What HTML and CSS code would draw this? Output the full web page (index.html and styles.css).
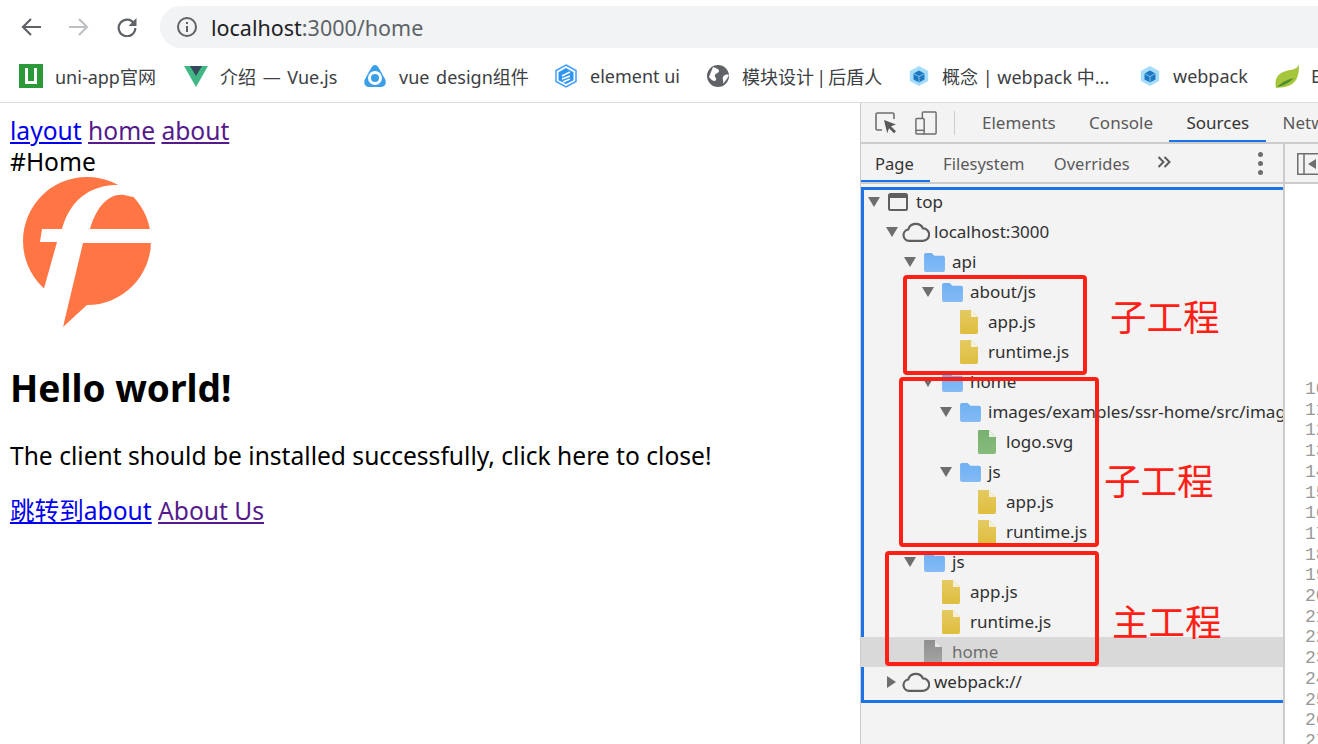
FILE: index.html
```html
<!DOCTYPE html>
<html lang="zh-CN">
<head>
<meta charset="utf-8">
<title>localhost:3000/home</title>
<link rel="stylesheet" href="styles.css">
</head>
<body>
<svg class="defs" width="0" height="0" aria-hidden="true">
  <defs>
    <linearGradient id="gFolder" x1="0" y1="0" x2="0" y2="1"><stop offset="0" stop-color="#6fb0f3"/><stop offset="1" stop-color="#84bbf6"/></linearGradient>
    <linearGradient id="gYellow" x1="0" y1="0" x2="0" y2="1"><stop offset="0" stop-color="#e4ca62"/><stop offset="1" stop-color="#dfbd3e"/></linearGradient>
    <linearGradient id="gGreen" x1="0" y1="0" x2="0" y2="1"><stop offset="0" stop-color="#78b06f"/><stop offset="1" stop-color="#86bb7c"/></linearGradient>
    <linearGradient id="gGray" x1="0" y1="0" x2="0" y2="1"><stop offset="0" stop-color="#8f8f8f"/><stop offset="1" stop-color="#a5a5a5"/></linearGradient>
    <symbol id="folder" viewBox="0 0 22 20"><path d="M0 2a2 2 0 0 1 2-2h6l3 3h9a2 2 0 0 1 2 2v13a2 2 0 0 1-2 2H2a2 2 0 0 1-2-2z" fill="url(#gFolder)"/></symbol>
    <symbol id="fileY" viewBox="0 0 18 24"><path d="M1 0h10l7 7v15a2 2 0 0 1-2 2H1.500A1.500 1.500 0 0 1 0 22.500V1a1 1 0 0 1 1-1z" fill="url(#gYellow)"/><path d="M11 0l7 7h-7z" fill="#f5efd8"/></symbol>
    <symbol id="fileG" viewBox="0 0 18 24"><path d="M1 0h10l7 7v15a2 2 0 0 1-2 2H1.500A1.500 1.500 0 0 1 0 22.500V1a1 1 0 0 1 1-1z" fill="url(#gGreen)"/><path d="M11 0l7 7h-7z" fill="#e6f0e3"/></symbol>
    <symbol id="fileK" viewBox="0 0 18 24"><path d="M1 0h10l7 7v15a2 2 0 0 1-2 2H1.500A1.500 1.500 0 0 1 0 22.500V1a1 1 0 0 1 1-1z" fill="url(#gGray)"/><path d="M11 0l7 7h-7z" fill="#e6e6e6"/></symbol>
    <symbol id="cloud" viewBox="0 0 28 20"><path d="M7 18.800a5.700 5.700 0 0 1-.8-11.300A8 8 0 0 1 21 6.400a6.200 6.200 0 0 1 0 12.400z" fill="none" stroke="#5f5f5f" stroke-width="2.200"/></symbol>
    <symbol id="wp" viewBox="0 0 24 24"><path d="M12 1l10 5.500v11L12 23 2 17.500v-11z" fill="#a5dcfa"/><path d="M12 6l6 3.300v6.400L12 19l-6-3.300V9.300z" fill="#1c78c0"/><path d="M6 9.300l6 3.300 6-3.300M12 12.600V19" fill="none" stroke="#a5dcfa" stroke-width=".8"/></symbol>
  </defs>
</svg>

<div class="page">
  <header class="toolbar">
    <svg class="nav-icon" viewBox="0 0 20 20"><path d="M20 10H2.500M10 2l-8 8 8 8" fill="none" stroke="#5f6368" stroke-width="2.200"/></svg>
    <svg class="nav-icon" viewBox="0 0 20 20"><path d="M0 10h17.500M10 2l8 8-8 8" fill="none" stroke="#bdc1c6" stroke-width="2.200"/></svg>
    <svg class="nav-icon" viewBox="0 0 20 20"><path d="M17 6.500A8.300 8.300 0 1 0 18.300 11" fill="none" stroke="#5f6368" stroke-width="2.200"/><path d="M19.500 1v8h-8z" fill="#5f6368"/></svg>
    <div class="omnibox">
      <svg class="info" viewBox="0 0 20 20"><circle cx="10" cy="10" r="9" fill="none" stroke="#5f6368" stroke-width="2"/><path d="M9 9h2v6H9zM9 5h2v2H9z" fill="#5f6368"/></svg>
      <span class="url"><span class="host">localhost</span>:3000/home</span>
    </div>
  </header>

  <nav class="bookmarks">
    <div class="bm"><svg class="bm-icon" viewBox="0 0 24 24"><rect width="24" height="24" fill="#2b9939"/><path d="M6 4h3v13h6V4h3v16H6z" fill="#fff"/></svg><span>uni-app官网</span></div>
    <div class="bm"><svg class="bm-icon" viewBox="0 0 24 24"><path d="M0 2h24L12 23z" fill="#41b883"/><path d="M6 2h12l-6 10z" fill="#35495e"/></svg><span class="wide">介绍 — Vue.js</span></div>
    <div class="bm"><svg class="bm-icon" viewBox="0 0 24 24"><path d="M12 1c2 0 3 1.500 5 5l5 9c2 4 0 8-4 8H6c-4 0-6-4-4-8l5-9c2-3.500 3-5 5-5z" fill="#3b9fe8"/><circle cx="12" cy="14" r="5.500" fill="none" stroke="#fff" stroke-width="3"/></svg><span class="wide">vue design组件</span></div>
    <div class="bm"><svg class="bm-icon" viewBox="0 0 24 24"><path d="M12 1l10 5.500v11L12 23 2 17.500v-11z" fill="#fff" stroke="#409eff" stroke-width="1.500"/><path d="M12 4l7.500 4.200v8L12 20l-7.500-3.800v-8z" fill="#2e95f5"/><path d="M8 12l8-4M8 15l8-3M9 18l7-3" stroke="#fff" stroke-width="1.500"/></svg><span>element ui</span></div>
    <div class="bm"><svg class="bm-icon" viewBox="0 0 24 24"><circle cx="12" cy="12" r="11" fill="#5f6368"/><path d="M7 3c3 1 6 2 6 4s-3 2-4 4 2 3 1 5-4 1-7-3zM23 11c-3-1-5 0-6 2s1 4 0 6 4-3 6-8z" fill="#fff"/></svg><span class="tight">模块设计 | 后盾人</span></div>
    <div class="bm"><svg class="bm-icon wp-icon"><use href="#wp"/></svg><span>概念 | webpack 中...</span></div>
    <div class="bm"><svg class="bm-icon wp-icon"><use href="#wp"/></svg><span>webpack</span></div>
    <div class="bm"><svg class="bm-icon" viewBox="0 0 24 24"><path d="M24 0C22 6 18 5 11 7 3 9-1 15 1 24c5-1 15 0 20-8 3-5 3-11 3-16z" fill="#a5c63b"/><path d="M2 23c6-6 12-8 17-9-5 5-11 8-17 9z" fill="#4f8e2e"/></svg><span>E</span></div>
  </nav>

  <main class="main">
    <section class="content">
      <div><a class="link" href="#">layout</a> <a class="link seen" href="#">home</a> <a class="link seen" href="#">about</a></div>
      <div>#Home</div>
      <svg class="logo" viewBox="10 177 150 152">
        <circle cx="87" cy="241" r="64" fill="#ff7544"/>
        <path d="M63 327 88 304 100 290 70 270z" fill="#ff7544"/>
        <path d="M120 185C100 184 72 192 62 229H42L40 242H57L43 292 63 327 83 243H160V229H90C97 205 110 193 124 195L133 197 165 170H120z" fill="#fff"/>
      </svg>
      <h1 class="hello">Hello world!</h1>
      <p class="para">The client should be installed successfully, click here to close!</p>
      <p class="para"><a class="link" href="#">跳转到about</a> <a class="link seen" href="#">About Us</a></p>
    </section>

    <aside class="devtools">
      <div class="dt-tabs">
        <svg class="dt-icon" viewBox="0 0 22 22"><path d="M7 18H2.500A1.500 1.500 0 0 1 1 16.500v-14A1.500 1.500 0 0 1 2.500 1h15A1.500 1.500 0 0 1 19 2.500V7" fill="none" stroke="#6e6e6e" stroke-width="1.600"/><path d="M9 8l12 4.500-5 1.800 5 5-2 2-5-5-1.800 5z" fill="#5a5a5a"/></svg>
        <svg class="dt-icon" viewBox="0 0 24 26"><path d="M8 8V2a1 1 0 0 1 1-1h13a1 1 0 0 1 1 1v22a1 1 0 0 1-1 1H9" fill="none" stroke="#6e6e6e" stroke-width="1.600"/><rect x="1" y="8" width="9" height="17" rx="1" fill="none" stroke="#6e6e6e" stroke-width="1.600"/><path d="M1 21h9" stroke="#6e6e6e" stroke-width="1.600"/></svg>
        <span class="dt-sep"></span>
        <span class="tab">Elements</span>
        <span class="tab">Console</span>
        <span class="tab active">Sources</span>
        <span class="tab">Network</span>
      </div>
      <div class="dt-body">
        <div class="navigator">
          <div class="sub-tabs">
            <span class="sub active">Page</span>
            <span class="sub">Filesystem</span>
            <span class="sub">Overrides</span>
            <svg class="more" viewBox="0 0 14 12"><path d="M1.500 1l5 5-5 5M7.500 1l5 5-5 5" fill="none" stroke="#5a5a5a" stroke-width="2"/></svg>
            <span class="kebab"><i></i><i></i><i></i></span>
          </div>
          <div class="tree">
            <div class="row d0"><span class="tri"></span><svg class="ico win" viewBox="0 0 20 18"><rect x="1" y="1" width="18" height="16" rx="1.500" fill="none" stroke="#5f5f5f" stroke-width="2"/><path d="M1 3.500h18" stroke="#5f5f5f" stroke-width="3"/></svg><span class="label">top</span></div>
            <div class="row d1"><span class="tri"></span><svg class="ico cld"><use href="#cloud"/></svg><span class="label">localhost:3000</span></div>
            <div class="row d2"><span class="tri"></span><svg class="ico fld"><use href="#folder"/></svg><span class="label">api</span></div>
            <div class="row d3"><span class="tri"></span><svg class="ico fld"><use href="#folder"/></svg><span class="label">about/js</span></div>
            <div class="row d4"><span class="notri"></span><svg class="ico fil"><use href="#fileY"/></svg><span class="label">app.js</span></div>
            <div class="row d4"><span class="notri"></span><svg class="ico fil"><use href="#fileY"/></svg><span class="label">runtime.js</span></div>
            <div class="row d3"><span class="tri"></span><svg class="ico fld"><use href="#folder"/></svg><span class="label">home</span></div>
            <div class="row d4"><span class="tri"></span><svg class="ico fld"><use href="#folder"/></svg><span class="label">images/examples/ssr-home/src/images</span></div>
            <div class="row d5"><span class="notri"></span><svg class="ico fil"><use href="#fileG"/></svg><span class="label">logo.svg</span></div>
            <div class="row d4"><span class="tri"></span><svg class="ico fld"><use href="#folder"/></svg><span class="label">js</span></div>
            <div class="row d5"><span class="notri"></span><svg class="ico fil"><use href="#fileY"/></svg><span class="label">app.js</span></div>
            <div class="row d5"><span class="notri"></span><svg class="ico fil"><use href="#fileY"/></svg><span class="label">runtime.js</span></div>
            <div class="row d2"><span class="tri"></span><svg class="ico fld"><use href="#folder"/></svg><span class="label">js</span></div>
            <div class="row d3"><span class="notri"></span><svg class="ico fil"><use href="#fileY"/></svg><span class="label">app.js</span></div>
            <div class="row d3"><span class="notri"></span><svg class="ico fil"><use href="#fileY"/></svg><span class="label">runtime.js</span></div>
            <div class="row d2 selected"><span class="notri"></span><svg class="ico fil"><use href="#fileK"/></svg><span class="label">home</span></div>
            <div class="row d1"><span class="tri closed"></span><svg class="ico cld"><use href="#cloud"/></svg><span class="label">webpack://</span></div>
          </div>
        </div>
        <div class="editor">
          <div class="ed-bar"><svg class="toggle" viewBox="0 0 24 22"><rect x=".75" y=".75" width="22.500" height="20.500" fill="none" stroke="#6e6e6e" stroke-width="1.500"/><path d="M7 1v20" stroke="#6e6e6e" stroke-width="1.500"/><path d="M19 6v10l-8-5z" fill="#6e6e6e"/></svg></div>
          <ol class="lines">
            <li>10</li><li>11</li><li>12</li><li>13</li><li>14</li><li>15</li><li>16</li><li>17</li><li>18</li><li>19</li><li>20</li><li>21</li><li>22</li><li>23</li><li>24</li><li>25</li><li>26</li><li>27</li>
          </ol>
        </div>
      </div>
    </aside>
  </main>

  <div class="mark box1"></div>
  <div class="mark box2"></div>
  <div class="mark box3"></div>
  <div class="note note1">子工程</div>
  <div class="note note2">子工程</div>
  <div class="note note3">主工程</div>
</div>
</body>
</html>
```

FILE: styles.css
```css
* { box-sizing: border-box; }
html, body { margin: 0; padding: 0; height: 100%; overflow: hidden; background: #fff; }
body { font-family: "Noto Sans", "Noto Sans CJK SC", sans-serif; color: #000; }
.defs { position: absolute; }
.page { position: relative; width: 1318px; height: 744px; overflow: hidden; display: flex; flex-direction: column; }

/* browser chrome */
.toolbar { height: 54px; flex: none; display: flex; align-items: center; padding: 0 0 0 21px; }
.nav-icon { width: 20px; height: 20px; margin-right: 28px; flex: none; }
.omnibox { flex: 1; height: 42px; margin-left: -5px; margin-right: -40px; background: #f1f3f4; border-radius: 21px; display: flex; align-items: center; padding-left: 17px; }
.info { width: 20px; height: 20px; flex: none; }
.url { margin-left: 14px; font-size: 21.500px; color: #5f6368; white-space: nowrap; }
.host { color: #202124; }

.bookmarks { height: 49px; flex: none; display: grid; grid-template-columns: 165px 179px 191px 152px 202px 231px 136px 60px; padding-left: 19px; padding-bottom: 4px; align-items: center; border-bottom: 1px solid #dadce0; white-space: nowrap; overflow: hidden; font-size: 18px; color: #3c4043; }
.bm { display: flex; align-items: center; gap: 12px; overflow: hidden; }
.bm-icon { width: 24px; height: 24px; flex: none; }
.wp-icon { width: 22px; height: 22px; }
.wide { word-spacing: 2px; }
.tight { word-spacing: -2.500px; }

/* main area */
.main { flex: 1; display: flex; min-height: 0; }
.content { width: 860px; flex: none; padding: 12px 10px 0; font-size: 24.600px; line-height: 31px; }
.link { color: #00e; text-decoration: underline; }
.link.seen { color: #551a8b; }
.logo { display: block; width: 150px; height: 152px; }
.hello { margin: 35px 0 0; font-size: 37px; line-height: 48px; font-weight: 700; }
.para { margin: 24px 0 0; }
.hello + .para { margin-top: 28px; }

/* devtools */
.devtools { flex: 1; min-width: 0; display: flex; flex-direction: column; background: #f3f3f3; border-left: 1px solid #ccc; overflow: hidden; font-size: 17px; }
.dt-tabs { height: 41px; flex: none; display: flex; align-items: center; border-bottom: 2px solid #ccc; padding-left: 14px; white-space: nowrap; color: #5a5a5a; }
.dt-icon { width: 22px; height: 24px; flex: none; margin-right: 18px; }
.dt-sep { width: 1px; height: 24px; background: #ccc; flex: none; margin-right: 10px; margin-left: -1px; }
.tab { height: 39px; line-height: 40px; padding: 0 17px; flex: none; }
.tab + .tab { margin-left: -.6px; }
.tab.active { color: #333; box-shadow: inset 0 -2px 0 #1a73e8; }

.dt-body { flex: 1; display: flex; min-height: 0; }
.navigator { width: 424px; flex: none; border-right: 2px solid #ccc; display: flex; flex-direction: column; }
.sub-tabs { height: 40px; flex: none; display: flex; align-items: center; border-bottom: 2px solid #ccc; color: #5a5a5a; white-space: nowrap; font-size: 16.500px; }
.sub { height: 38px; line-height: 39px; padding: 0 16px 0 14px; flex: none; }
.sub + .sub { margin-left: -.6px; }
.sub.active { color: #333; box-shadow: inset 0 -2px 0 #1a73e8; }
.more { width: 14px; height: 12px; flex: none; margin-left: 11px; margin-top: -2px; }
.kebab { margin-left: auto; margin-right: 20px; display: flex; flex-direction: column; gap: 4px; }
.kebab i { width: 5px; height: 5px; border-radius: 50%; background: #6e6e6e; display: block; }

.tree { margin-top: 3px; padding-bottom: 6px; box-shadow: inset 3px 3px 0 #1a73e8, inset 0 -3px 0 #1a73e8; color: #303030; }
.row { height: 30px; display: flex; align-items: center; white-space: nowrap; overflow: hidden; }
.d0 { padding-left: 7px; }
.d1 { padding-left: 25px; }
.d2 { padding-left: 43px; }
.d3 { padding-left: 61px; }
.d4 { padding-left: 79px; }
.d5 { padding-left: 97px; }
.selected { background: #d9d9d9; color: #6e6e6e; }
.tri, .notri { width: 20px; flex: none; display: block; }
.tri::before { content: ""; display: block; width: 0; height: 0; border-left: 6px solid transparent; border-right: 6px solid transparent; border-top: 10px solid #6e6e6e; }
.tri.closed::before { margin-left: 1px; border-top: 6px solid transparent; border-bottom: 6px solid transparent; border-left: 9px solid #6e6e6e; border-right: 0; }
.ico { flex: none; }
.win { width: 20px; height: 18px; margin-right: 8px; }
.cld { width: 28px; height: 20px; margin-left: -4px; margin-right: 4px; }
.fld { width: 21px; height: 19px; margin-right: 7px; }
.fil { width: 18px; height: 24px; margin-right: 10px; }
.label { flex: none; margin-bottom: 1px; }

.editor { flex: 1; min-width: 0; background: #fff; display: flex; flex-direction: column; overflow: hidden; }
.ed-bar { height: 40px; flex: none; background: #f3f3f3; border-bottom: 2px solid #ccc; padding: 9px 0 0 12px; }
.toggle { display: block; width: 24px; height: 22px; }
.lines { list-style: none; margin: 0; padding: 195px 0 0 20px; font-family: "Liberation Mono", monospace; font-size: 18px; line-height: 20.700px; color: #999; white-space: nowrap; }

/* red annotations drawn over the screenshot */
.mark { position: absolute; border: 4px solid #ff2015; border-radius: 4px; }
.box1 { left: 903px; top: 275px; width: 184px; height: 100px; }
.box2 { left: 899px; top: 377px; width: 200px; height: 170px; }
.box3 { left: 885px; top: 551px; width: 214px; height: 115px; }
.note { position: absolute; font-family: "Noto Sans CJK SC", sans-serif; font-size: 36.500px; line-height: 40px; color: #ff2015; white-space: nowrap; }
.note1 { left: 1110px; top: 296px; }
.note2 { left: 1104px; top: 460px; }
.note3 { left: 1112px; top: 601px; }
```
